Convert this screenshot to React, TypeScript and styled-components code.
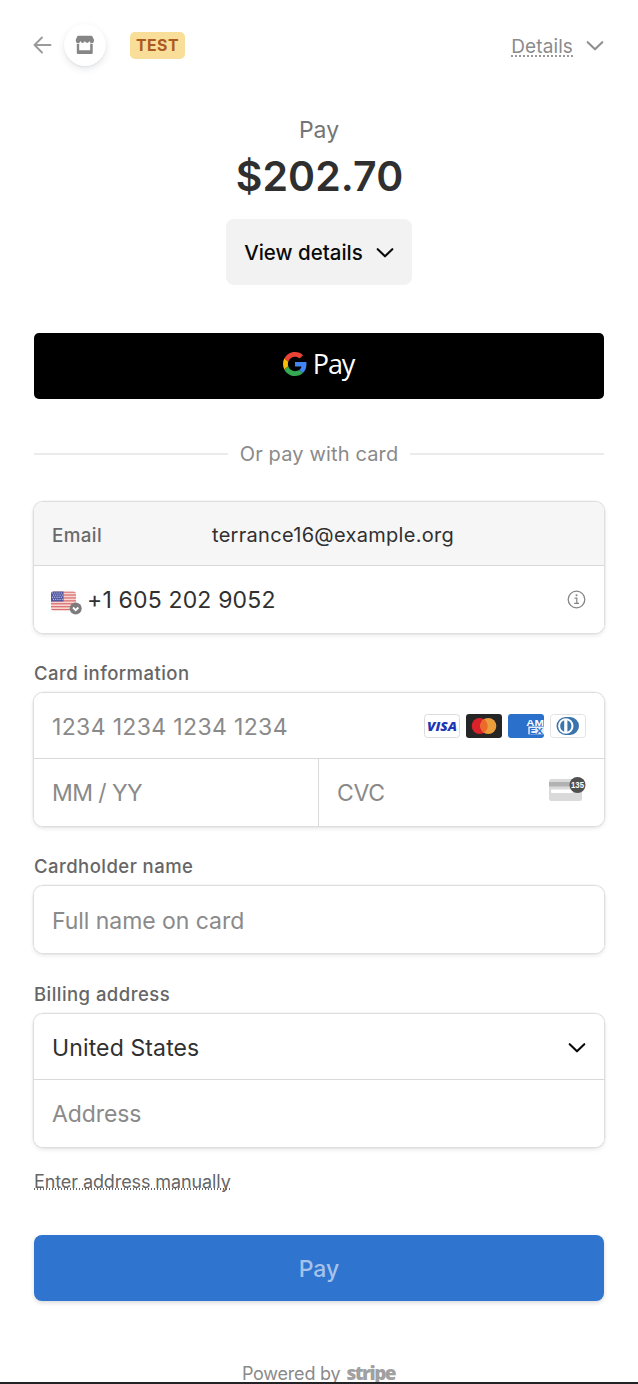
import React from "react";
import styled, { createGlobalStyle } from "styled-components";

const GlobalStyle = createGlobalStyle`
  * { box-sizing: border-box; }
  body {
    margin: 0;
    background: #fff;
    font-family: Inter, "Liberation Sans", sans-serif;
    -webkit-font-smoothing: antialiased;
  }
`;

const Page = styled.div`
  height: 1384px;
  overflow: hidden;
  display: flex;
  flex-direction: column;
  border-bottom: 2px solid #232325;
`;

const Header = styled.header`
  height: 90px;
  padding: 0 34px 0 33px;
  display: flex;
  align-items: center;
  flex: none;
`;

const Store = styled.div`
  width: 42px;
  height: 42px;
  margin-left: 12px;
  border-radius: 50%;
  background: #fff;
  display: flex;
  align-items: center;
  justify-content: center;
  box-shadow: 0 3px 7px rgba(60, 66, 87, 0.12), 0 1px 2px rgba(0, 0, 0, 0.06);
`;

const TestBadge = styled.span`
  width: 55px;
  height: 27px;
  margin-left: 24px;
  border-radius: 5px;
  background: #f8de98;
  color: #ab5a22;
  font-size: 15.8px;
  font-weight: 700;
  line-height: 27px;
  letter-spacing: 0.5px;
  text-align: center;
`;

const HeaderLink = styled.div`
  margin-left: auto;
  padding-top: 2px;
  display: flex;
  align-items: center;
  gap: 13px;
`;

const DetailsLink = styled.a`
  height: 21px;
  padding-top: 2px;
  color: #8b8b8b;
  font-size: 19px;
  line-height: 17px;
  letter-spacing: 0.1px;
  border-bottom: 2px dotted #999;
`;

const Summary = styled.section`
  height: 243px;
  display: flex;
  flex-direction: column;
  align-items: center;
  flex: none;
`;

const PayLabel = styled.div`
  margin-top: 25px;
  height: 30px;
  line-height: 30px;
  font-size: 23px;
  color: #757575;
`;

const Amount = styled.div`
  height: 60px;
  line-height: 60px;
  margin: 1px 0 0 1px;
  font-size: 41px;
  font-weight: 600;
  letter-spacing: 0.1px;
  color: #2f2f2f;
`;

const ViewDetails = styled.button`
  width: 186px;
  height: 66px;
  margin-top: 13px;
  padding: 0;
  border: 0;
  border-radius: 8px;
  background: #f2f2f2;
  color: #0a0a0a;
  font: 500 20.5px Inter, sans-serif;
  display: flex;
  align-items: center;
  justify-content: center;
  gap: 13px;
  > svg { margin-top: 2px; }
`;

const Main = styled.main`
  padding: 0 33px;
  display: flex;
  flex-direction: column;
`;

const GooglePay = styled.button`
  height: 66px;
  margin: 0 1px;
  padding: 0 1px 5px 0;
  border: 0;
  border-radius: 5px;
  background: #000;
  display: flex;
  align-items: center;
  justify-content: center;
`;

const GPayWord = styled.span`
  margin: 0 0 0 6px;
  color: #fff;
  font: 500 27px/32px "Open Sans", sans-serif;
  letter-spacing: -1.1px;
`;

const Divider = styled.div`
  height: 30px;
  margin: 40px 1px 32px;
  display: flex;
  align-items: center;
  gap: 12px;
  color: #8a8a8a;
  font-size: 20px;
  letter-spacing: 0.15px;
  white-space: nowrap;
  &::before, &::after {
    content: "";
    flex: 1;
    height: 2px;
    background: #ebebeb;
  }
`;

const Group = styled.div`
  border: 1px solid #dedede;
  border-radius: 10px;
  overflow: hidden;
  box-shadow: 0 0 0 0.5px rgba(0, 0, 0, 0.06), 0 2px 4px rgba(0, 0, 0, 0.08);
`;

const Row = styled.div<{ $h: number; $line?: boolean; $muted?: boolean }>`
  height: ${(p) => p.$h}px;
  padding: 0 18px;
  display: flex;
  align-items: center;
  background: ${(p) => (p.$muted ? "#f6f6f6" : "#fff")};
  border-bottom: ${(p) => (p.$line ? "1px solid #d9d9d9" : "0")};
`;

const Split = styled.div`
  display: grid;
  grid-template-columns: 284px 1fr;
  > * + * { border-left: 1px solid #d9d9d9; }
`;

const Value = styled.span<{ $size?: number; $track?: number; $drop?: boolean }>`
  padding-top: ${(p) => (p.$drop ? 2 : 0)}px;
  font-size: ${(p) => p.$size ?? 23}px;
  letter-spacing: ${(p) => p.$track ?? 0}px;
  color: #303030;
  white-space: nowrap;
`;

const Placeholder = styled(Value)`
  color: #8a8a8a;
`;

const EmailLabel = styled.span`
  width: 160px;
  padding-top: 3px;
  font-size: 18.8px;
  font-weight: 500;
  letter-spacing: 0.4px;
  color: #6a6a6a;
`;

const Label = styled.label`
  height: 26px;
  line-height: 26px;
  padding-left: 1px;
  font-size: 18.5px;
  font-weight: 500;
  letter-spacing: 0.45px;
  color: #666;
`;

const End = styled.div<{ $lift?: number; $drop?: number }>`
  margin-left: auto;
  padding-top: ${(p) => p.$drop ?? 0}px;
  padding-bottom: ${(p) => p.$lift ?? 0}px;
  display: flex;
  align-items: center;
  gap: 4px;
`;

const CardBrands = styled(End)`
  margin-right: -1px;
`;

const FlagSlot = styled.div`
  width: 36px;
  margin-left: -1px;
  padding-top: 6px;
  display: flex;
`;

const ManualLink = styled.a`
  align-self: flex-start;
  height: 20px;
  margin: 25px 0 0 1px;
  font-size: 18px;
  line-height: 18px;
  letter-spacing: -0.1px;
  color: #666;
  background: linear-gradient(90deg, #666 1.5px, transparent 0) 0 15px / 3px 2px repeat-x;
`;

const PayButton = styled.button`
  height: 66px;
  margin: 42px 1px 0;
  padding: 2px 0 0;
  border: 0;
  border-radius: 8px;
  background: #2f74ce;
  color: #a5c3ea;
  font: 500 23px Inter, sans-serif;
  box-shadow: 0 2px 4px rgba(0, 0, 0, 0.14);
`;

const Footer = styled.footer`
  height: 30px;
  margin-top: 57px;
  padding-right: 1px;
  display: flex;
  align-items: center;
  justify-content: center;
  gap: 6px;
  color: #8a8a8a;
  font-size: 18px;
  letter-spacing: -0.2px;
`;

const StripeWord = styled.span`
  font: 800 19px "Open Sans", sans-serif;
  letter-spacing: -1.5px;
  color: #a0a0a0;
`;

const Chevron = ({ color }: { color: string }) => (
  <svg width="18" height="12" viewBox="0 0 18 12" fill="none">
    <path d="M1.7 2.2 9 9.3 16.3 2.2" stroke={color} strokeWidth="2.1" strokeLinecap="round" strokeLinejoin="round" />
  </svg>
);

const BackArrow = () => (
  <svg width="19" height="18" viewBox="0 0 19 18" fill="none" stroke="#9a9a9a" strokeWidth="1.9" strokeLinecap="round" strokeLinejoin="round">
    <path d="M9 1.5 1.5 9 9 16.5M1.5 9h16" />
  </svg>
);

const StoreIcon = () => (
  <svg width="20" height="20" viewBox="0 0 20 20" fill="#868686">
    <path d="M3.2.8h13.200a1 1 0 0 1 .9.5L19 4.800v.9a2.300 2.300 0 0 1-4.600.4 2.300 2.300 0 0 1-4.500 0 2.300 2.300 0 0 1-4.500 0A2.300 2.300 0 0 1 .8 5.700v-.9L2.300 1.300a1 1 0 0 1 .9-.5z" />
    <path d="M1.800 8.800q1.300.3 2.400-.2v6.600h11V8.600q1.200.5 2.500.2V18a1 1 0 0 1-1 1H2.800a1 1 0 0 1-1-1z" />
  </svg>
);

const GoogleG = () => (
  <svg width="24" height="24" viewBox="0 0 48 48">
    <path fill="#EA4335" d="M24 9.500c3.540 0 6.710 1.220 9.210 3.600l6.850-6.850C35.900 2.380 30.470 0 24 0 14.620 0 6.510 5.380 2.560 13.220l7.980 6.190C12.430 13.720 17.740 9.500 24 9.500z" />
    <path fill="#4285F4" d="M46.980 24.550c0-1.570-.15-3.090-.38-4.550H24v9.020h12.940c-.58 2.960-2.260 5.480-4.780 7.180l7.730 6c4.510-4.180 7.090-10.360 7.090-17.650z" />
    <path fill="#FBBC05" d="M10.530 28.590c-.48-1.450-.76-2.990-.76-4.590s.27-3.140.76-4.590l-7.980-6.190C.92 16.460 0 20.120 0 24c0 3.880.92 7.540 2.560 10.780l7.970-6.190z" />
    <path fill="#34A853" d="M24 48c6.480 0 11.930-2.130 15.890-5.810l-7.730-6c-2.150 1.450-4.920 2.300-8.160 2.300-6.260 0-11.570-4.220-13.470-9.910l-7.980 6.190C6.510 42.620 14.620 48 24 48z" />
  </svg>
);

const STARS = [0, 1, 2, 3].flatMap((r) => [0, 1, 2, 3, 4].map((c) => ({ x: 1.5 + c * 2.2 + (r % 2), y: 2 + r * 2.1 })));

const Flag = () => (
  <svg width="31" height="24" viewBox="0 0 31 24">
    <defs>
      <clipPath id="flag"><rect width="25" height="19" y="0.5" rx="2.5" /></clipPath>
    </defs>
    <g clipPath="url(#flag)">
      <rect width="25" height="20" fill="#f8d4d2" />
      {[0, 1, 2, 3, 4, 5, 6].map((i) => (
        <rect key={i} y={0.5 + i * 2.92} width="25" height="1.2" fill="#d56b69" />
      ))}
      <rect width="12.5" height="10.5" fill="#5356a0" />
      {STARS.map((s, i) => (
        <circle key={i} cx={s.x} cy={s.y} r="0.6" fill="#d5d7f2" />
      ))}
    </g>
    <circle cx="24.7" cy="17.5" r="6" fill="#7c7c7c" />
    <path d="m22 16.500 2.700 2.600 2.700-2.600" fill="none" stroke="#fff" strokeWidth="1.9" />
  </svg>
);

const InfoIcon = () => (
  <svg width="19" height="19" viewBox="0 0 19 19" fill="none" stroke="#858585">
    <circle cx="9.5" cy="9.5" r="8.3" strokeWidth="1.3" />
    <path d="M7.600 8.200h2.200v5M7.200 13.400h4.800" strokeWidth="1.2" />
    <circle cx="9.5" cy="5.2" r="1" fill="#858585" stroke="none" />
  </svg>
);

const Visa = () => (
  <svg width="38" height="26" viewBox="0 0 38 26">
    <rect x="1.5" y="1.5" width="35" height="23" rx="3" fill="#fff" stroke="#dcdcdc" />
    <text x="4" y="17.6" textLength="30" lengthAdjust="spacingAndGlyphs" fontFamily="Open Sans" fontWeight="800" fontStyle="italic" fontSize="13" fill="#2037b4">VISA</text>
  </svg>
);

const Mastercard = () => (
  <svg width="38" height="26" viewBox="0 0 38 26">
    <rect x="1" y="1" width="36" height="24" rx="3" fill="#252525" />
    <circle cx="14.7" cy="13" r="8" fill="#d9222a" />
    <circle cx="23.3" cy="13" r="8" fill="#eb9f3c" />
    <path d="M19 6.250a8 8 0 0 1 0 13.500 8 8 0 0 1 0-13.500z" fill="#ec6a2c" />
  </svg>
);

const Amex = () => (
  <svg width="38" height="26" viewBox="0 0 38 26">
    <defs>
      <clipPath id="amex"><rect x="1" y="1" width="36" height="24" rx="3" /></clipPath>
    </defs>
    <g clipPath="url(#amex)" fontFamily="Liberation Sans" fontWeight="700" fontSize="9">
      <rect x="1" y="1" width="36" height="24" fill="#2b71cb" />
      <text x="19.3" y="12.5" textLength="17.5" lengthAdjust="spacingAndGlyphs" fill="#fff">AM</text>
      <rect x="21.3" y="13.5" width="15.7" height="7.8" fill="#e4eefa" />
      <text x="22" y="20.7" textLength="14" lengthAdjust="spacingAndGlyphs" fill="#2b71cb">EX</text>
    </g>
  </svg>
);

const Diners = () => (
  <svg width="38" height="26" viewBox="0 0 38 26">
    <rect x="1.5" y="1.5" width="35" height="23" rx="3" fill="#fff" stroke="#e2e2e2" />
    <path d="M16.500 4h4.500a9 9 0 0 1 0 18h-4.500a9 9 0 0 1 0-18z" fill="#3b74ad" />
    <circle cx="16.8" cy="13" r="7.7" fill="#fff" />
    <path d="M15.200 7.200v11.600a6.200 6.200 0 0 1 0-11.600zM18.400 7.200v11.600a6.200 6.200 0 0 0 0-11.600z" fill="#3b74ad" />
  </svg>
);

const CvcIcon = () => (
  <svg width="38" height="26" viewBox="0 0 38 26">
    <rect x="1" y="3" width="33" height="22" rx="2.5" fill="#dadada" />
    <rect x="1" y="6" width="33" height="4.5" fill="#b2b2b2" />
    <rect x="3" y="13.5" width="22" height="3.5" rx="1" fill="#fff" />
    <circle cx="29.5" cy="9" r="8" fill="#505050" />
    <text x="23" y="12.3" textLength="13" lengthAdjust="spacingAndGlyphs" fontFamily="Liberation Sans" fontWeight="700" fontSize="9.5" fill="#fff">135</text>
  </svg>
);

const Gap = styled.div<{ $h: number }>`
  height: ${(p) => p.$h}px;
`;

export default function App() {
  return (
    <Page>
      <GlobalStyle />
      <Header>
        <BackArrow />
        <Store><StoreIcon /></Store>
        <TestBadge>TEST</TestBadge>
        <HeaderLink>
          <DetailsLink>Details</DetailsLink>
          <Chevron color="#8f8f8f" />
        </HeaderLink>
      </Header>
      <Summary>
        <PayLabel>Pay</PayLabel>
        <Amount>$202.70</Amount>
        <ViewDetails>View details <Chevron color="#0a0a0a" /></ViewDetails>
      </Summary>
      <Main>
        <GooglePay><GoogleG /><GPayWord>Pay</GPayWord></GooglePay>
        <Divider>Or pay with card</Divider>
        <Group>
          <Row $h={64} $line $muted>
            <EmailLabel>Email</EmailLabel>
            <Value $size={20} $track={0.3} $drop>terrance16@example.org</Value>
          </Row>
          <Row $h={67}>
            <FlagSlot><Flag /></FlagSlot>
            <Value $track={0.17}>+1 605 202 9052</Value>
            <End $lift={1}><InfoIcon /></End>
          </Row>
        </Group>
        <Gap $h={26} />
        <Label>Card information</Label>
        <Gap $h={6} />
        <Group>
          <Row $h={66} $line>
            <Placeholder $track={0.35} $drop>1234 1234 1234 1234</Placeholder>
            <CardBrands><Visa /><Mastercard /><Amex /><Diners /></CardBrands>
          </Row>
          <Split>
            <Row $h={67}><Placeholder $track={-0.55}>MM / YY</Placeholder></Row>
            <Row $h={67}><Placeholder $track={-0.3}>CVC</Placeholder><End $lift={7}><CvcIcon /></End></Row>
          </Split>
        </Group>
        <Gap $h={26} />
        <Label>Cardholder name</Label>
        <Gap $h={6} />
        <Group>
          <Row $h={67}><Placeholder $track={-0.05} $drop>Full name on card</Placeholder></Row>
        </Group>
        <Gap $h={27} />
        <Label>Billing address</Label>
        <Gap $h={6} />
        <Group>
          <Row $h={66} $line>
            <Value $track={0.13} $drop>United States</Value>
            <End $drop={3}><Chevron color="#0a0a0a" /></End>
          </Row>
          <Row $h={67}><Placeholder $track={-0.1}>Address</Placeholder></Row>
        </Group>
        <ManualLink>Enter address manually</ManualLink>
        <PayButton>Pay</PayButton>
        <Footer>Powered by <StripeWord>stripe</StripeWord></Footer>
      </Main>
    </Page>
  );
}
